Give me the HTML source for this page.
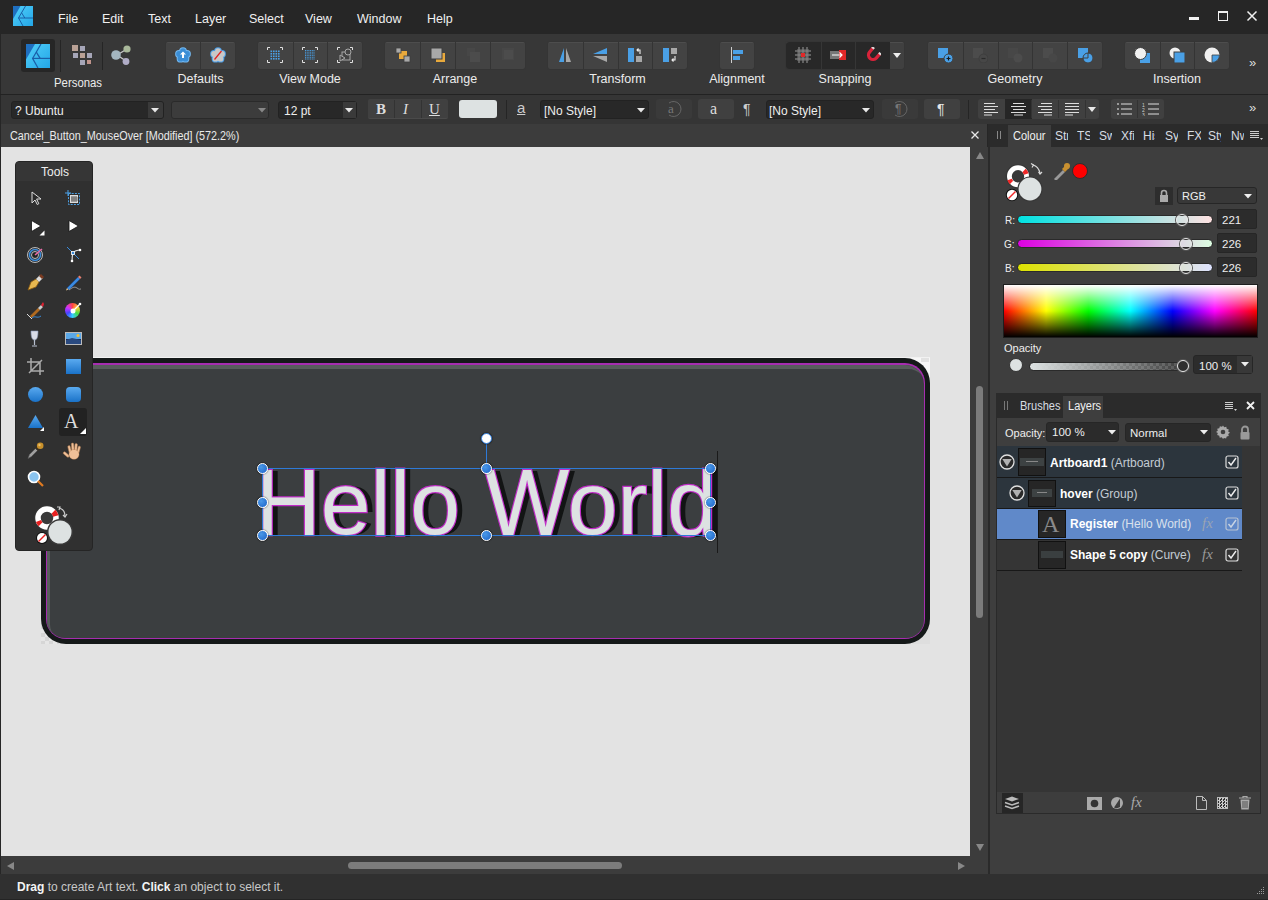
<!DOCTYPE html>
<html><head><meta charset="utf-8">
<style>
*{box-sizing:border-box;margin:0;padding:0}
html,body{width:1268px;height:900px;overflow:hidden;background:#262626;font-family:"Liberation Sans",sans-serif;color:#e6e6e6}
.a{position:absolute}
.t{position:absolute;white-space:pre;line-height:1;font-size:12px;color:#e8e8e8}
.mn{position:absolute;top:13px;font-size:12.5px;color:#f0f0f0;white-space:pre;line-height:1}
.grp{position:absolute;top:42px;height:27px;background:#434343;border-radius:2px;border-top:1px solid #4d4d4d;box-shadow:0 0 1px #2c2c2c}
.sep{position:absolute;top:0;width:1px;height:27px;background:#333}
.lbl{position:absolute;top:73px;font-size:12.5px;color:#ececec;white-space:pre;line-height:1}
.hd{width:11px;height:11px;border-radius:50%;border:1.5px solid #fff;background:radial-gradient(circle at 35% 35%,#4a98e8,#1a62c8);box-shadow:0 0 1px 1px rgba(0,0,0,.25)}
.thumb{width:12px;height:12px;border-radius:50%;border:1.5px solid #e8e8e8;box-shadow:0 0 0 1px #555;background:transparent}
.hwl i{font-style:normal;color:transparent!important;-webkit-text-stroke:0!important}
</style></head><body>
<!-- MENU BAR -->
<div class="a" style="left:0;top:0;width:1268px;height:34px;background:#262626"></div>
<div id="menu"></div>
<!-- MAIN TOOLBAR -->
<div class="a" style="left:1px;top:34px;width:1267px;height:60px;background:#373737"></div>
<div class="a" style="left:0;top:94px;width:1268px;height:1px;background:#222"></div>
<!-- CONTEXT TOOLBAR -->
<div class="a" style="left:1px;top:95px;width:1267px;height:29px;background:#353535"></div>
<!-- DOC TAB -->
<div class="a" style="left:1px;top:124px;width:986px;height:23px;background:#3c3c3c"></div>
<!-- CANVAS -->
<div class="a" style="left:1px;top:147px;width:969px;height:709px;background:#e3e3e3"></div>
<!-- ARTBOARD -->
<div class="a" style="left:41px;top:357px;width:889px;height:1px;background:#f2f2f2"></div>
<div class="a" style="left:912px;top:358px;width:18px;height:22px;background:#f7f7f7"></div>
<div class="a" style="left:921px;top:358px;width:8px;height:4px;background:#e2e2e2"></div>
<div class="a" style="left:41px;top:621px;width:23px;height:23px;background:repeating-conic-gradient(#d6d6d6 0 25%,#e6e6e6 0 50%) 0 0/8px 8px"></div>
<div class="a" style="left:907px;top:621px;width:23px;height:23px;background:#dedede"></div>
<div class="a" style="left:41px;top:358px;width:889px;height:286px;border-radius:25px;background:#151919"></div>
<div class="a" style="left:46px;top:363px;width:879px;height:276px;border-radius:20px;background:#a62db0"></div>
<div class="a" style="left:47px;top:365px;width:877px;height:273px;border-radius:19px 19px 18px 18px;background:#3b3e40;box-shadow:inset 3px 4px 0 #575d5c"></div>
<!-- TEXT -->
<div class="a" style="left:256px;top:458.5px;width:470px;height:100px;font-size:89.5px;line-height:90px;white-space:pre;clip-path:inset(9px -20px -20px -20px)">
<div class="a hwl" style="left:0;top:0;transform:scaleY(1.062);transform-origin:0 76px"><span class="a" style="left:0;top:0;color:#121414;transform:translate(6px,0.5px)">H<i>e</i><i>l</i><i>l</i><i>o</i> W<i>o</i><i>r</i><i>l</i><i>d</i></span></div>
<div class="a hwl" style="left:0;top:0;transform:scaleY(1.03);transform-origin:0 76px"><span class="a" style="left:0;top:0;color:#121414;transform:translate(6px,0.5px)"><i>H</i><i>e</i>ll<i>o</i> <i>W</i><i>o</i><i>r</i>ld</span></div>
<div class="a hwl" style="left:0;top:0;transform:translateY(-1.5px) scaleY(0.985);transform-origin:0 76px"><span class="a" style="left:0;top:0;color:#121414;transform:translate(6px,0.5px)"><i>H</i>e<i>l</i><i>l</i>o <i>W</i>or<i>l</i><i>d</i></span></div>
<div class="a hwl" style="left:0;top:0;transform:scaleY(1.062);transform-origin:0 76px"><span class="a" style="left:0;top:0;color:#c02cc8;-webkit-text-stroke:2.4px #c02cc8">H<i>e</i><i>l</i><i>l</i><i>o</i> W<i>o</i><i>r</i><i>l</i><i>d</i></span></div>
<div class="a hwl" style="left:0;top:0;transform:scaleY(1.03);transform-origin:0 76px"><span class="a" style="left:0;top:0;color:#c02cc8;-webkit-text-stroke:2.4px #c02cc8"><i>H</i><i>e</i>ll<i>o</i> <i>W</i><i>o</i><i>r</i>ld</span></div>
<div class="a hwl" style="left:0;top:0;transform:translateY(-1.5px) scaleY(0.985);transform-origin:0 76px"><span class="a" style="left:0;top:0;color:#c02cc8;-webkit-text-stroke:2.4px #c02cc8"><i>H</i>e<i>l</i><i>l</i>o <i>W</i>or<i>l</i><i>d</i></span></div>
<div class="a hwl" style="left:0;top:0;transform:scaleY(1.062);transform-origin:0 76px"><span class="a" style="left:0;top:0;color:#dde2e2">H<i>e</i><i>l</i><i>l</i><i>o</i> W<i>o</i><i>r</i><i>l</i><i>d</i></span></div>
<div class="a hwl" style="left:0;top:0;transform:scaleY(1.03);transform-origin:0 76px"><span class="a" style="left:0;top:0;color:#dde2e2"><i>H</i><i>e</i>ll<i>o</i> <i>W</i><i>o</i><i>r</i>ld</span></div>
<div class="a hwl" style="left:0;top:0;transform:translateY(-1.5px) scaleY(0.985);transform-origin:0 76px"><span class="a" style="left:0;top:0;color:#dde2e2"><i>H</i>e<i>l</i><i>l</i>o <i>W</i>or<i>l</i><i>d</i></span></div>
</div>
<!-- SELECTION -->
<div class="a" style="left:262px;top:468px;width:449px;height:68px;border:1px solid #2e7ad8"></div>
<div class="a" style="left:486px;top:438px;width:1px;height:30px;background:#2e7ad8"></div>
<div class="a hd" style="left:256.5px;top:462.5px"></div>
<div class="a hd" style="left:480.5px;top:462.5px"></div>
<div class="a hd" style="left:704.5px;top:462.5px"></div>
<div class="a hd" style="left:256.5px;top:496.5px"></div>
<div class="a hd" style="left:704.5px;top:496.5px"></div>
<div class="a hd" style="left:256.5px;top:529.5px"></div>
<div class="a hd" style="left:480.5px;top:529.5px"></div>
<div class="a hd" style="left:704.5px;top:529.5px"></div>
<div class="a hd" style="left:480.5px;top:432.5px;background:#fff;border-color:#2e7ad8;border-width:1.5px"></div>
<div class="a" style="left:717px;top:451px;width:1px;height:102px;background:#1a1a1a"></div>
<!-- SCROLLBARS -->
<div class="a" style="left:970px;top:147px;width:18px;height:727px;background:#3c3c3c"></div>
<div class="a" style="left:1px;top:856px;width:969px;height:18px;background:#3c3c3c"></div>
<div class="a" style="left:976px;top:386px;width:7px;height:232px;background:#7c7c7c;border-radius:4px"></div>
<div class="a" style="left:348px;top:862px;width:274px;height:7px;background:#7c7c7c;border-radius:4px"></div>
<!-- DIVIDER -->
<div class="a" style="left:988px;top:124px;width:2px;height:750px;background:#2a2a2a"></div>
<!-- RIGHT PANEL -->
<div class="a" style="left:990px;top:124px;width:278px;height:750px;background:#3e3e3e"></div>
<div class="a" style="left:990px;top:124px;width:278px;height:23px;background:#2b2b2b"></div>
<!-- layers frame -->
<div class="a" style="left:996px;top:393px;width:265px;height:421px;background:#353535;border:1px solid #2a2a2a"></div>
<div class="a" style="left:996px;top:393px;width:265px;height:25px;background:#2b2b2b"></div>
<div class="a" style="left:997px;top:418px;width:263px;height:28px;background:#3e3e3e"></div>
<div class="a" style="left:997px;top:792px;width:263px;height:21px;background:#3d3d3d"></div>
<!-- STATUS BAR -->
<div class="a" style="left:0;top:874px;width:1268px;height:26px;background:#303030"></div>
<!-- MENU CONTENT -->
<svg class="a" style="left:13px;top:6px" width="20" height="20" viewBox="0 0 20 20">
<defs><linearGradient id="lg1" x1="0" y1="0" x2="1" y2="1"><stop offset="0" stop-color="#52d0fa"/><stop offset="1" stop-color="#23a6e6"/></linearGradient></defs>
<rect width="20" height="20" fill="url(#lg1)"/>
<polygon points="0,0 7.5,0 0,13" fill="#1f6fc0"/>
<polyline points="12.5,0 5.5,12 10,20" fill="none" stroke="#1a5fa8" stroke-width="1"/>
<line x1="5.5" y1="12" x2="20" y2="12" stroke="#1a5fa8" stroke-width="1"/><path d="M8.6 6.8L11.8 12" stroke="#1a5fa8" stroke-width="1"/>
</svg>
<div class="mn" style="left:58px">File</div>
<div class="mn" style="left:102px">Edit</div>
<div class="mn" style="left:148px">Text</div>
<div class="mn" style="left:195px">Layer</div>
<div class="mn" style="left:249px">Select</div>
<div class="mn" style="left:305px">View</div>
<div class="mn" style="left:357px">Window</div>
<div class="mn" style="left:427px">Help</div>
<div class="a" style="left:1189px;top:17px;width:10px;height:3px;background:#f0f0f0"></div>
<div class="a" style="left:1218px;top:11px;width:10px;height:10px;border:1.3px solid #f0f0f0;border-top-width:2.5px"></div>
<svg class="a" style="left:1246px;top:10px" width="12" height="12" viewBox="0 0 12 12"><path d="M1.5 1.5L10.5 10.5M10.5 1.5L1.5 10.5" stroke="#f0f0f0" stroke-width="1.5"/></svg>
<!-- TOOLBAR -->
<div class="a" style="left:21px;top:39px;width:34px;height:33px;background:#262626;border-radius:3px"></div>
<svg class="a" style="left:26px;top:44px" width="24" height="24" viewBox="0 0 20 20">
<rect width="20" height="20" fill="url(#lg1)"/><polygon points="0,0 7.5,0 0,13" fill="#1f6fc0"/>
<polyline points="12.5,0 5.5,12 10,20" fill="none" stroke="#1a5fa8" stroke-width="1"/><line x1="5.5" y1="12" x2="20" y2="12" stroke="#1a5fa8" stroke-width="1"/><path d="M8.6 6.8L11.8 12" stroke="#1a5fa8" stroke-width="1"/></svg>
<div class="a" style="left:60px;top:40px;width:1px;height:32px;background:#252525"></div>
<div class="a" style="left:102px;top:42px;width:1px;height:28px;background:#252525"></div>
<svg class="a" style="left:72px;top:45px" width="21" height="20" viewBox="0 0 21 20">
<rect x="0" y="0" width="6" height="6" fill="#b9a195"/><rect x="8" y="1" width="5" height="5" fill="#a6a6b8"/>
<rect x="1" y="8" width="5" height="5" fill="#a6a6b8"/><rect x="8" y="8" width="5" height="5" fill="#b9a195"/><rect x="15" y="8" width="5" height="5" fill="#a6a6b8"/>
<rect x="8" y="15" width="5" height="5" fill="#a6a6b8"/><rect x="15" y="15" width="4" height="4" fill="#c0948c"/></svg>
<svg class="a" style="left:111px;top:45px" width="21" height="21" viewBox="0 0 21 21">
<path d="M6 10L16 4M6 10L15 16" stroke="#c8c8c8" stroke-width="1.3"/>
<circle cx="5" cy="10" r="4.8" fill="#a3b5bf"/><circle cx="16" cy="4" r="3.6" fill="#a9b89a"/><circle cx="15" cy="16.5" r="3.4" fill="#b0acc6"/></svg>
<div class="lbl" style="left:54px;top:77px;transform:scaleX(.91);transform-origin:0 0">Personas</div>
<div class="grp" style="left:166px;width:69px"></div>
<div class="a" style="left:200px;top:42px;width:1px;height:27px;background:#343434"></div>
<svg class="a" style="left:175.2px;top:47px" width="16" height="16" viewBox="0 0 16 16"><circle cx="8.00" cy="4.10" r="3.9" fill="#74b8f0"/><circle cx="11.99" cy="7.00" r="3.9" fill="#74b8f0"/><circle cx="10.47" cy="11.70" r="3.9" fill="#74b8f0"/><circle cx="5.53" cy="11.70" r="3.9" fill="#74b8f0"/><circle cx="4.01" cy="7.00" r="3.9" fill="#74b8f0"/><circle cx="8" cy="8.3" r="5" fill="#74b8f0"/><circle cx="8.00" cy="4.10" r="2.9" fill="#3b8ed6"/><circle cx="11.99" cy="7.00" r="2.9" fill="#3b8ed6"/><circle cx="10.47" cy="11.70" r="2.9" fill="#3b8ed6"/><circle cx="5.53" cy="11.70" r="2.9" fill="#3b8ed6"/><circle cx="4.01" cy="7.00" r="2.9" fill="#3b8ed6"/><circle cx="8" cy="8.3" r="4.6" fill="#3b8ed6"/><path d="M8 4.5l3 3H9v3.5H7V7.5H5z" fill="#fff"/></svg>
<svg class="a" style="left:209.8px;top:47px" width="16" height="16" viewBox="0 0 16 16"><circle cx="8.00" cy="4.10" r="3.9" fill="#4a9ee8"/><circle cx="11.99" cy="7.00" r="3.9" fill="#4a9ee8"/><circle cx="10.47" cy="11.70" r="3.9" fill="#4a9ee8"/><circle cx="5.53" cy="11.70" r="3.9" fill="#4a9ee8"/><circle cx="4.01" cy="7.00" r="3.9" fill="#4a9ee8"/><circle cx="8" cy="8.3" r="5" fill="#4a9ee8"/><circle cx="8.00" cy="4.10" r="2.9" fill="#c8c8c8"/><circle cx="11.99" cy="7.00" r="2.9" fill="#c8c8c8"/><circle cx="10.47" cy="11.70" r="2.9" fill="#c8c8c8"/><circle cx="5.53" cy="11.70" r="2.9" fill="#c8c8c8"/><circle cx="4.01" cy="7.00" r="2.9" fill="#c8c8c8"/><circle cx="8" cy="8.3" r="4.6" fill="#c8c8c8"/><path d="M4.5 12.5L11.5 4" stroke="#e02020" stroke-width="1.2"/></svg>
<div class="lbl" style="left:126px;width:149px;text-align:center">Defaults</div>
<div class="grp" style="left:258px;width:104px"></div>
<div class="a" style="left:293px;top:42px;width:1px;height:27px;background:#343434"></div>
<div class="a" style="left:327px;top:42px;width:1px;height:27px;background:#343434"></div>
<svg class="a" style="left:267.3px;top:47px" width="16" height="16" viewBox="0 0 16 16"><rect x="3.5" y="3.5" width="1.6" height="1.6" fill="#4aa0e6"/><rect x="3.5" y="6.0" width="1.6" height="1.6" fill="#4aa0e6"/><rect x="3.5" y="8.5" width="1.6" height="1.6" fill="#4aa0e6"/><rect x="3.5" y="11.0" width="1.6" height="1.6" fill="#4aa0e6"/><rect x="6.0" y="3.5" width="1.6" height="1.6" fill="#4aa0e6"/><rect x="6.0" y="6.0" width="1.6" height="1.6" fill="#4aa0e6"/><rect x="6.0" y="8.5" width="1.6" height="1.6" fill="#4aa0e6"/><rect x="6.0" y="11.0" width="1.6" height="1.6" fill="#4aa0e6"/><rect x="8.5" y="3.5" width="1.6" height="1.6" fill="#4aa0e6"/><rect x="8.5" y="6.0" width="1.6" height="1.6" fill="#4aa0e6"/><rect x="8.5" y="8.5" width="1.6" height="1.6" fill="#4aa0e6"/><rect x="8.5" y="11.0" width="1.6" height="1.6" fill="#4aa0e6"/><rect x="11.0" y="3.5" width="1.6" height="1.6" fill="#4aa0e6"/><rect x="11.0" y="6.0" width="1.6" height="1.6" fill="#4aa0e6"/><rect x="11.0" y="8.5" width="1.6" height="1.6" fill="#4aa0e6"/><rect x="11.0" y="11.0" width="1.6" height="1.6" fill="#4aa0e6"/><path d="M0.5 3V0.5H3M13 0.5h2.5V3M15.5 13v2.5H13M3 15.5H0.5V13" stroke="#e0e0e0" stroke-width="1" fill="none"/></svg>
<svg class="a" style="left:302.0px;top:47px" width="16" height="16" viewBox="0 0 16 16"><rect x="3.0" y="3.0" width="1" height="1" fill="#4aa0e6"/><rect x="3.0" y="4.7" width="1" height="1" fill="#4aa0e6"/><rect x="3.0" y="6.4" width="1" height="1" fill="#4aa0e6"/><rect x="3.0" y="8.1" width="1" height="1" fill="#4aa0e6"/><rect x="3.0" y="9.8" width="1" height="1" fill="#4aa0e6"/><rect x="3.0" y="11.5" width="1" height="1" fill="#4aa0e6"/><rect x="4.7" y="3.0" width="1" height="1" fill="#4aa0e6"/><rect x="4.7" y="4.7" width="1" height="1" fill="#4aa0e6"/><rect x="4.7" y="6.4" width="1" height="1" fill="#4aa0e6"/><rect x="4.7" y="8.1" width="1" height="1" fill="#4aa0e6"/><rect x="4.7" y="9.8" width="1" height="1" fill="#4aa0e6"/><rect x="4.7" y="11.5" width="1" height="1" fill="#4aa0e6"/><rect x="6.4" y="3.0" width="1" height="1" fill="#4aa0e6"/><rect x="6.4" y="4.7" width="1" height="1" fill="#4aa0e6"/><rect x="6.4" y="6.4" width="1" height="1" fill="#4aa0e6"/><rect x="6.4" y="8.1" width="1" height="1" fill="#4aa0e6"/><rect x="6.4" y="9.8" width="1" height="1" fill="#4aa0e6"/><rect x="6.4" y="11.5" width="1" height="1" fill="#4aa0e6"/><rect x="8.1" y="3.0" width="1" height="1" fill="#4aa0e6"/><rect x="8.1" y="4.7" width="1" height="1" fill="#4aa0e6"/><rect x="8.1" y="6.4" width="1" height="1" fill="#4aa0e6"/><rect x="8.1" y="8.1" width="1" height="1" fill="#4aa0e6"/><rect x="8.1" y="9.8" width="1" height="1" fill="#4aa0e6"/><rect x="8.1" y="11.5" width="1" height="1" fill="#4aa0e6"/><rect x="9.8" y="3.0" width="1" height="1" fill="#4aa0e6"/><rect x="9.8" y="4.7" width="1" height="1" fill="#4aa0e6"/><rect x="9.8" y="6.4" width="1" height="1" fill="#4aa0e6"/><rect x="9.8" y="8.1" width="1" height="1" fill="#4aa0e6"/><rect x="9.8" y="9.8" width="1" height="1" fill="#4aa0e6"/><rect x="9.8" y="11.5" width="1" height="1" fill="#4aa0e6"/><rect x="11.5" y="3.0" width="1" height="1" fill="#4aa0e6"/><rect x="11.5" y="4.7" width="1" height="1" fill="#4aa0e6"/><rect x="11.5" y="6.4" width="1" height="1" fill="#4aa0e6"/><rect x="11.5" y="8.1" width="1" height="1" fill="#4aa0e6"/><rect x="11.5" y="9.8" width="1" height="1" fill="#4aa0e6"/><rect x="11.5" y="11.5" width="1" height="1" fill="#4aa0e6"/><path d="M0.5 3V0.5H3M13 0.5h2.5V3M15.5 13v2.5H13M3 15.5H0.5V13" stroke="#e0e0e0" stroke-width="1" fill="none"/></svg>
<svg class="a" style="left:336.7px;top:47px" width="16" height="16" viewBox="0 0 16 16"><path d="M0.5 3V0.5H3M13 0.5h2.5V3M15.5 13v2.5H13M3 15.5H0.5V13" stroke="#e0e0e0" stroke-width="1" fill="none"/><rect x="5" y="5" width="8" height="8" fill="none" stroke="#a8a8a8"/><circle cx="11" cy="5" r="3" fill="#444" stroke="#a8a8a8"/><path d="M3 8l5 3-5 3z" fill="#444" stroke="#a8a8a8"/></svg>
<div class="lbl" style="left:218px;width:184px;text-align:center">View Mode</div>
<div class="grp" style="left:385px;width:140px"></div>
<div class="a" style="left:420px;top:42px;width:1px;height:27px;background:#343434"></div>
<div class="a" style="left:455px;top:42px;width:1px;height:27px;background:#343434"></div>
<div class="a" style="left:490px;top:42px;width:1px;height:27px;background:#343434"></div>
<svg class="a" style="left:394.5px;top:47px" width="16" height="16" viewBox="0 0 16 16"><rect x="1" y="1" width="5" height="5" fill="#a8a8a8"/><rect x="4" y="4" width="8" height="8" fill="#e8a93c"/><rect x="9" y="9" width="6" height="6" fill="#a8a8a8" stroke="#3e3e3e" stroke-width=".8"/><rect x="1" y="1" width="5" height="5" fill="#a8a8a8" stroke="#3e3e3e" stroke-width=".8"/></svg>
<svg class="a" style="left:429.5px;top:47px" width="16" height="16" viewBox="0 0 16 16"><rect x="6" y="6" width="9" height="9" fill="#e8a93c"/><rect x="1" y="1" width="11" height="11" fill="#a8a8a8" stroke="#3e3e3e" stroke-width="1"/></svg>
<svg class="a" style="left:464.5px;top:47px" width="16" height="16" viewBox="0 0 16 16"><rect x="2" y="1" width="8" height="8" fill="#474747"/><rect x="5" y="5" width="10" height="10" fill="#4c4c4c"/></svg>
<svg class="a" style="left:499.5px;top:47px" width="16" height="16" viewBox="0 0 16 16"><rect x="2" y="1" width="12" height="12" fill="#474747"/><rect x="4" y="3" width="9" height="9" fill="#4c4c4c"/></svg>
<div class="lbl" style="left:345px;width:220px;text-align:center">Arrange</div>
<div class="grp" style="left:548px;width:139px"></div>
<div class="a" style="left:583px;top:42px;width:1px;height:27px;background:#343434"></div>
<div class="a" style="left:618px;top:42px;width:1px;height:27px;background:#343434"></div>
<div class="a" style="left:652px;top:42px;width:1px;height:27px;background:#343434"></div>
<svg class="a" style="left:557.4px;top:47px" width="16" height="16" viewBox="0 0 16 16"><path d="M7 1L2 15h5z" fill="#4aa0e6"/><path d="M9 1l5 14H9z" fill="#a8a8a8"/></svg>
<svg class="a" style="left:592.1px;top:47px" width="16" height="16" viewBox="0 0 16 16"><path d="M15 1L1 7h14z" fill="#4aa0e6"/><path d="M15 15L1 9h14z" fill="#a8a8a8"/></svg>
<svg class="a" style="left:626.9px;top:47px" width="16" height="16" viewBox="0 0 16 16"><rect x="1" y="1" width="6" height="14" fill="#4aa0e6"/><rect x="9" y="9" width="6" height="6" fill="#a8a8a8"/><path d="M13 7V3H10M11.5 1.5L10 3l1.5 1.5" stroke="#f0f0f0" fill="none" stroke-width="1.1"/></svg>
<svg class="a" style="left:661.6px;top:47px" width="16" height="16" viewBox="0 0 16 16"><rect x="1" y="1" width="6" height="14" fill="#4aa0e6"/><rect x="9" y="1" width="6" height="6" fill="#a8a8a8"/><path d="M13 9v4H10M11.5 11.5L10 13l1.5 1.5" stroke="#f0f0f0" fill="none" stroke-width="1.1"/></svg>
<div class="lbl" style="left:508px;width:219px;text-align:center">Transform</div>
<div class="grp" style="left:720px;width:34px"></div>
<svg class="a" style="left:729.0px;top:47px" width="16" height="16" viewBox="0 0 16 16"><rect x="2" y="0" width="1" height="16" fill="#ccc"/><rect x="4" y="3" width="10" height="4" fill="#4aa0e6"/><rect x="4" y="9" width="7" height="4" fill="#4aa0e6"/></svg>
<div class="lbl" style="left:680px;width:114px;text-align:center">Alignment</div>
<div class="grp" style="left:928px;width:174px"></div>
<div class="a" style="left:963px;top:42px;width:1px;height:27px;background:#343434"></div>
<div class="a" style="left:998px;top:42px;width:1px;height:27px;background:#343434"></div>
<div class="a" style="left:1032px;top:42px;width:1px;height:27px;background:#343434"></div>
<div class="a" style="left:1067px;top:42px;width:1px;height:27px;background:#343434"></div>
<svg class="a" style="left:937.4px;top:47px" width="16" height="16" viewBox="0 0 16 16"><rect x="1" y="1" width="10" height="10" fill="#4aa0e6"/><circle cx="11.5" cy="11.5" r="4.5" fill="#4aa0e6" stroke="#3e3e3e" stroke-width="1"/><path d="M9.5 11.5h4M11.5 9.5v4" stroke="#1a1a1a" stroke-width="1.2"/></svg>
<svg class="a" style="left:972.2px;top:47px" width="16" height="16" viewBox="0 0 16 16"><rect x="1" y="1" width="10" height="10" fill="#4c4c4c"/><circle cx="11.5" cy="11.5" r="4.5" fill="#474747" stroke="#3e3e3e" stroke-width="1"/><path d="M9.5 11.5h4" stroke="#2a2a2a" stroke-width="1.2"/></svg>
<svg class="a" style="left:1007.0px;top:47px" width="16" height="16" viewBox="0 0 16 16"><rect x="1" y="1" width="10" height="10" fill="#474747"/><circle cx="11" cy="11" r="4.5" fill="#4c4c4c"/></svg>
<svg class="a" style="left:1041.8px;top:47px" width="16" height="16" viewBox="0 0 16 16"><rect x="1" y="1" width="10" height="10" fill="#4c4c4c"/><circle cx="11" cy="11" r="4.5" fill="#474747"/></svg>
<svg class="a" style="left:1076.6px;top:47px" width="16" height="16" viewBox="0 0 16 16"><rect x="1" y="1" width="10" height="10" fill="#4aa0e6"/><circle cx="11" cy="11" r="5" fill="#4aa0e6" stroke="#3e3e3e" stroke-width="1"/><path d="M6 11h5V6" stroke="#3e3e3e" fill="none" stroke-width="1"/></svg>
<div class="lbl" style="left:888px;width:254px;text-align:center">Geometry</div>
<div class="grp" style="left:1125px;width:104px"></div>
<div class="a" style="left:1160px;top:42px;width:1px;height:27px;background:#343434"></div>
<div class="a" style="left:1194px;top:42px;width:1px;height:27px;background:#343434"></div>
<svg class="a" style="left:1134.3px;top:47px" width="16" height="16" viewBox="0 0 16 16"><rect x="6" y="6" width="10" height="10" fill="#4aa0e6"/><circle cx="6.5" cy="6.5" r="6" fill="#f0f0f0" stroke="#3e3e3e" stroke-width="1"/></svg>
<svg class="a" style="left:1169.0px;top:47px" width="16" height="16" viewBox="0 0 16 16"><circle cx="6" cy="6" r="5.5" fill="#f0f0f0"/><rect x="5" y="5" width="11" height="11" fill="#4aa0e6" stroke="#3e3e3e" stroke-width="1"/></svg>
<svg class="a" style="left:1203.7px;top:47px" width="16" height="16" viewBox="0 0 16 16"><circle cx="8" cy="8" r="7.5" fill="#f0f0f0"/><path d="M8 8h7.5A7.5 7.5 0 0 1 8 15.5z" fill="#4aa0e6" stroke="#3e3e3e" stroke-width=".8"/></svg>
<div class="lbl" style="left:1085px;width:184px;text-align:center">Insertion</div>
<div class="grp" style="left:786px;width:118px;background:#404040"></div>
<div class="a" style="left:786px;top:42px;width:104px;height:27px;background:#282828;border-radius:3px 0 0 3px"></div>
<div class="a" style="left:821px;top:42px;width:1px;height:27px;background:#363636"></div>
<div class="a" style="left:855px;top:42px;width:1px;height:27px;background:#363636"></div>
<svg class="a" style="left:795.3px;top:47px" width="16" height="16" viewBox="0 0 16 16"><path d="M4 0v16M8 0v16M12 0v16M0 4h16M0 8h16M0 12h16" stroke="#9a9a9a" stroke-width="1"/><rect x="1" y="1" width="14" height="14" fill="none"/><rect x="2" y="2" width="12" height="12" fill="#777" opacity=".5"/><rect x="6" y="6" width="4" height="4" fill="#e02828"/></svg>
<svg class="a" style="left:830.0px;top:47px" width="16" height="16" viewBox="0 0 16 16"><rect x="0" y="4" width="9" height="8" fill="#777"/><rect x="9" y="3" width="7" height="10" fill="#e02828"/><path d="M2 8h10M9.5 5.5L12 8l-2.5 2.5" stroke="#fff" fill="none" stroke-width="1.2"/></svg>
<svg class="a" style="left:864.7px;top:47px" width="16" height="16" viewBox="0 0 16 16"><g transform="rotate(40 8 8)"><path d="M3.5 2v6a4.5 4.5 0 0 0 9 0V2" stroke="#d8233a" stroke-width="3.2" fill="none"/><path d="M2 2.5h3M11 2.5h3" stroke="#ddd" stroke-width="2"/></g></svg>
<svg class="a" style="left:893px;top:53px" width="8" height="5" viewBox="0 0 8 5"><path d="M0 0h8L4 5z" fill="#eee"/></svg>
<div class="lbl" style="left:786px;width:118px;text-align:center">Snapping</div>
<div class="a" style="left:1249px;top:56px;font-size:13px;color:#ddd;line-height:1">&#187;</div>
<!-- CONTEXT BAR -->
<div class="a" style="left:11px;top:101px;width:153px;height:18px;background:#282828;border:1px solid #222;border-radius:3px"></div>
<div class="a" style="left:148px;top:102px;width:15px;height:16px;background:#3a3a3a;border-radius:0 2px 2px 0"></div>
<svg class="a" style="left:151px;top:108px" width="8" height="5"><path d="M0 0h8L4 4.5z" fill="#e8e8e8"/></svg>
<div class="t" style="left:15px;top:105px;font-size:12px;color:#eee">? Ubuntu</div>
<div class="a" style="left:171px;top:101px;width:98px;height:18px;background:#3c3c3c;border:1px solid #2a2a2a;border-radius:3px"></div>
<svg class="a" style="left:258px;top:108px" width="8" height="5"><path d="M0 0h8L4 4.5z" fill="#888"/></svg>
<div class="a" style="left:278px;top:101px;width:79px;height:18px;background:#282828;border:1px solid #222;border-radius:3px"></div>
<div class="a" style="left:343px;top:102px;width:13px;height:16px;background:#3a3a3a"></div>
<svg class="a" style="left:345px;top:108px" width="8" height="5"><path d="M0 0h8L4 4.5z" fill="#e8e8e8"/></svg>
<div class="t" style="left:284px;top:105px;font-size:12px;color:#eee">12 pt</div>
<div class="a" style="left:368px;top:99px;width:80px;height:20px;background:#404040;border-radius:2px;border-bottom:1px solid #4a4a4a"></div>
<div class="a" style="left:394px;top:100px;width:1px;height:18px;background:#333"></div>
<div class="a" style="left:421px;top:100px;width:1px;height:18px;background:#333"></div>
<div class="t" style="left:376px;top:102px;font-family:'Liberation Serif';font-size:15px;font-weight:bold;color:#ddd">B</div>
<div class="t" style="left:403px;top:102px;font-family:'Liberation Serif';font-size:15px;font-style:italic;color:#ddd">I</div>
<div class="t" style="left:429px;top:102px;font-family:'Liberation Serif';font-size:15px;color:#ddd;text-decoration:underline">U</div>
<div class="a" style="left:459px;top:100px;width:38px;height:18px;background:#dde2e2;border-radius:3px"></div>
<div class="a" style="left:506px;top:100px;width:1px;height:19px;background:#252525"></div>
<div class="t" style="left:517px;top:100px;font-size:15px;color:#ccc;text-decoration:underline">a</div>
<div class="a" style="left:540px;top:100px;width:109px;height:19px;background:#282828;border:1px solid #222;border-radius:3px"></div>
<div class="t" style="left:544px;top:105px;font-size:12px;color:#eee">[No Style]</div>
<svg class="a" style="left:637px;top:108px" width="8" height="5"><path d="M0 0h8L4 4.5z" fill="#e8e8e8"/></svg>
<div class="a" style="left:656px;top:99px;width:36px;height:20px;background:#3a3a3a;border-radius:3px"></div>
<div class="t" style="left:668px;top:102px;font-size:13px;color:#777;font-family:'Liberation Serif'">a</div>
<svg class="a" style="left:664px;top:100px" width="20" height="18"><path d="M5 3A7.5 7.5 0 1 1 5 15" stroke="#666" fill="none"/></svg>
<div class="a" style="left:698px;top:99px;width:36px;height:20px;background:#404040;border-radius:3px"></div>
<div class="t" style="left:710px;top:101px;font-size:16px;color:#ddd;font-family:'Liberation Serif'">a</div>
<div class="t" style="left:743px;top:102px;font-size:14px;color:#ccc">&#182;</div>
<div class="a" style="left:766px;top:100px;width:108px;height:19px;background:#282828;border:1px solid #222;border-radius:3px"></div>
<div class="t" style="left:769px;top:105px;font-size:12px;color:#eee">[No Style]</div>
<svg class="a" style="left:862px;top:108px" width="8" height="5"><path d="M0 0h8L4 4.5z" fill="#e8e8e8"/></svg>
<div class="a" style="left:882px;top:99px;width:36px;height:20px;background:#3a3a3a;border-radius:3px"></div>
<div class="t" style="left:895px;top:103px;font-size:12px;color:#777">&#182;</div>
<svg class="a" style="left:890px;top:100px" width="20" height="18"><path d="M5 3A7.5 7.5 0 1 1 5 15" stroke="#666" fill="none"/></svg>
<div class="a" style="left:924px;top:99px;width:36px;height:20px;background:#404040;border-radius:3px"></div>
<div class="t" style="left:937px;top:102px;font-size:14px;color:#e6e6e6">&#182;</div>
<div class="a" style="left:968px;top:100px;width:1px;height:19px;background:#252525"></div>
<div class="a" style="left:978px;top:99px;width:121px;height:20px;background:#404040;border-radius:3px"></div>
<div class="a" style="left:1005px;top:99px;width:27px;height:20px;background:#262626"></div>
<div class="a" style="left:1031px;top:100px;width:1px;height:18px;background:#333"></div>
<div class="a" style="left:1058px;top:100px;width:1px;height:18px;background:#333"></div>
<div class="a" style="left:1085px;top:100px;width:1px;height:18px;background:#333"></div>
<svg class="a" style="left:1085px;top:107px" width="14" height="6"><path d="M3 0h8L7 5z" fill="#e8e8e8"/></svg>
<svg class="a" style="left:983px;top:102px" width="17" height="14"><path d="M1 1.5h11M1 4.5h14M1 7.5h11M1 10.5h14M1 13h8" stroke="#ddd"/></svg>
<svg class="a" style="left:1010px;top:102px" width="17" height="14"><path d="M3 1.5h11M1 4.5h15M3 7.5h11M1 10.5h15M4 13h9" stroke="#ddd"/></svg>
<svg class="a" style="left:1037px;top:102px" width="17" height="14"><path d="M4 1.5h11M1 4.5h14M4 7.5h11M1 10.5h14M7 13h8" stroke="#ddd"/></svg>
<svg class="a" style="left:1064px;top:102px" width="17" height="14"><path d="M1 1.5h14M1 4.5h14M1 7.5h14M1 10.5h14M1 13h8" stroke="#ddd"/></svg>
<div class="a" style="left:1111px;top:99px;width:53px;height:20px;background:#404040;border-radius:3px"></div>
<div class="a" style="left:1137px;top:100px;width:1px;height:18px;background:#333"></div>
<svg class="a" style="left:1116px;top:102px" width="17" height="14"><path d="M5 2h11M5 7h11M5 12h11" stroke="#ddd"/><path d="M1 2h2M2 1v2M1 7h2M2 6v2M1 12h2M2 11v2" stroke="#ccc" stroke-width=".8"/></svg>
<svg class="a" style="left:1142px;top:102px" width="17" height="14"><path d="M6 2h11M6 7h11M6 12h11" stroke="#ddd"/><text x="0" y="5" font-size="5" fill="#ccc" font-family="Liberation Sans">1</text><text x="0" y="10" font-size="5" fill="#ccc" font-family="Liberation Sans">2</text><text x="0" y="15" font-size="5" fill="#ccc" font-family="Liberation Sans">3</text></svg>
<div class="a" style="left:1249px;top:101px;font-size:13px;color:#ddd;line-height:1">&#187;</div>
<!-- DOC TAB -->
<div class="t" style="left:10px;top:130px;font-size:12px;color:#eaeaea;transform:scaleX(.9);transform-origin:0 0">Cancel_Button_MouseOver [Modified] (572.2%)</div>
<svg class="a" style="left:971px;top:131px" width="8" height="8"><path d="M0.5 0.5L7.5 7.5M7.5 0.5L0.5 7.5" stroke="#e8e8e8" stroke-width="1.3"/></svg>
<!-- TOOLS PANEL -->
<div class="a" style="left:15px;top:161px;width:78px;height:390px;background:#303030;border-radius:4px;border:1px solid #252525"></div>
<div class="a" style="left:16px;top:162px;width:76px;height:19px;background:#363636;border-radius:3px 3px 0 0"></div>
<div class="t" style="left:41px;top:166px;font-size:12px;color:#eee">Tools</div>
<div class="a" style="left:64.5px;top:302.5px;width:15px;height:15px;border-radius:50%;background:conic-gradient(#f44 0,#fc3 60deg,#4d4 120deg,#3cf 180deg,#44f 240deg,#c3f 300deg,#f44 360deg)"></div>
<div class="a" style="left:59px;top:408px;width:28px;height:28px;background:#222;border-radius:3px"></div>
<svg width="0" height="0" style="position:absolute"><defs><linearGradient id="bg1" x1="0" y1="0" x2="0" y2="1"><stop offset="0" stop-color="#5aaaf0"/><stop offset="1" stop-color="#1a72c8"/></linearGradient><radialGradient id="cw"><stop offset="0" stop-color="#fff"/><stop offset="1" stop-color="#f0f"/></radialGradient></defs></svg>
<svg class="a" style="left:25.5px;top:188.5px;overflow:visible" width="19" height="19" viewBox="0 0 19 19"><path d="M6 3v11l3-3 2.2 4.5 1.6-.8L10.6 10H15z" fill="#2a2a2a" stroke="#ddd" stroke-width="1"/></svg>
<svg class="a" style="left:63.5px;top:188.5px;overflow:visible" width="19" height="19" viewBox="0 0 19 19"><rect x="4.5" y="4.5" width="11" height="11" fill="none" stroke="#4aa0e6" stroke-dasharray="2 1.2"/><rect x="6.5" y="6.5" width="7" height="7" fill="#9a9a9a" stroke="#ddd" stroke-width="1"/><path d="M7 9h7M7 11h7" stroke="#555" stroke-width=".7"/><path d="M1 4h6M4 1v6" stroke="#4aa0e6" stroke-width="1"/></svg>
<svg class="a" style="left:25.5px;top:216.5px;overflow:visible" width="19" height="19" viewBox="0 0 19 19"><path d="M5.5 3.5v11l9.5-5.5z" fill="#fff" stroke="#111" stroke-width=".8"/><path d="M18.5 18.5h-5l5-5z" fill="#fff"/></svg>
<svg class="a" style="left:63.5px;top:216.5px;overflow:visible" width="19" height="19" viewBox="0 0 19 19"><path d="M5 3.5v11l9.5-5.5z" fill="#fff" stroke="#111" stroke-width=".8"/></svg>
<svg class="a" style="left:25.5px;top:244.5px;overflow:visible" width="19" height="19" viewBox="0 0 19 19"><circle cx="9" cy="10" r="7.5" fill="none" stroke="#bbb" stroke-width="1"/><circle cx="9" cy="10" r="5.5" fill="none" stroke="#3a8ad8" stroke-width="1.5"/><circle cx="9" cy="10" r="3.5" fill="#222" stroke="#bbb" stroke-width="1"/><path d="M9 10L16 4" stroke="#e86aa8" stroke-width="1.6"/></svg>
<svg class="a" style="left:63.5px;top:244.5px;overflow:visible" width="19" height="19" viewBox="0 0 19 19"><path d="M3 2l6 6 6 6" stroke="#3a8ad8" stroke-width="1"/><path d="M9 8C11 5 14 5 17 5M9 8C8 11 8 14 8 17" stroke="#ddd" stroke-width="1.2" fill="none"/><rect x="7.5" y="6.5" width="3" height="3" fill="#3a8ad8" stroke="#fff" stroke-width=".8"/><circle cx="16" cy="5" r="1.3" fill="#fff"/><circle cx="8" cy="16" r="1.3" fill="#fff"/></svg>
<svg class="a" style="left:25.5px;top:272.5px;overflow:visible" width="19" height="19" viewBox="0 0 19 19"><path d="M2 17l3-8 5-3 3 3-3 5z" fill="#e8b850" stroke="#8a5a10" stroke-width=".8"/><path d="M10 6l3 3 4-4-3-3z" fill="#ddd"/><path d="M13 3l3 3 2-2-3-3z" fill="#7a3a20"/></svg>
<svg class="a" style="left:63.5px;top:272.5px;overflow:visible" width="19" height="19" viewBox="0 0 19 19"><path d="M3 15L14 4l2 2L5 17z" fill="#3a8ae0" stroke="#1a4a90" stroke-width=".6"/><path d="M14 4l1.5-1.5 2 2L16 6z" fill="#e88070"/><path d="M3 15l-1 2.5 2.5-1z" fill="#e8c890"/><path d="M5 17C8 15 10 13 13 15s2 1 4 1" stroke="#aaa" stroke-width=".8" fill="none"/></svg>
<svg class="a" style="left:25.5px;top:300.5px;overflow:visible" width="19" height="19" viewBox="0 0 19 19"><path d="M4 15L12 7l2 2-8 8z" fill="#b06a20"/><path d="M12 7l3-3 2 2-3 3z" fill="#ccc"/><path d="M15 4l2-3 1 2-1 3z" fill="#e02030"/><path d="M1 13l5 5" stroke="#ddd" stroke-width="1"/><path d="M6 17c3-3 5 1 9-2" stroke="#3a8ad8" stroke-width="1" fill="none"/></svg>
<svg class="a" style="left:63.5px;top:300.5px;overflow:visible" width="19" height="19" viewBox="0 0 19 19"><circle cx="9" cy="10" r="2.5" fill="#fff"/><path d="M9 10L16 3" stroke="#fff" stroke-width="1.2"/><circle cx="16" cy="3" r="1.3" fill="#fff"/></svg>
<svg class="a" style="left:25.5px;top:328.5px;overflow:visible" width="19" height="19" viewBox="0 0 19 19"><path d="M5 2h7c0 6-1 9-3.5 9S5 8 5 2z" fill="#d8dce8" stroke="#8898b8" stroke-width=".6"/><path d="M8.5 11v5M6 17h5" stroke="#b8c0d0" stroke-width="1.2"/></svg>
<svg class="a" style="left:63.5px;top:328.5px;overflow:visible" width="19" height="19" viewBox="0 0 19 19"><rect x="1.5" y="3.5" width="16" height="12" fill="#1a2a50" stroke="#bbb" stroke-width="1"/><rect x="2" y="4" width="15" height="6" fill="#5aa8e8"/><path d="M2 11l6-2 9 2v4H2z" fill="#2a4a80"/><circle cx="14" cy="6.5" r="1.5" fill="#f8c030"/></svg>
<svg class="a" style="left:25.5px;top:356.5px;overflow:visible" width="19" height="19" viewBox="0 0 19 19"><path d="M5 1v13h13M1 5h13v13M3 16L16 3" stroke="#aaa" stroke-width="1.5" fill="none"/></svg>
<svg class="a" style="left:63.5px;top:356.5px;overflow:visible" width="19" height="19" viewBox="0 0 19 19"><rect x="2" y="2" width="15" height="15" fill="url(#bg1)"/></svg>
<svg class="a" style="left:25.5px;top:384.5px;overflow:visible" width="19" height="19" viewBox="0 0 19 19"><circle cx="9.5" cy="9.5" r="7.5" fill="url(#bg1)"/></svg>
<svg class="a" style="left:63.5px;top:384.5px;overflow:visible" width="19" height="19" viewBox="0 0 19 19"><rect x="2" y="2" width="15" height="15" rx="4" fill="url(#bg1)"/></svg>
<svg class="a" style="left:25.5px;top:412.5px;overflow:visible" width="19" height="19" viewBox="0 0 19 19"><path d="M9.5 2L17 15H2z" fill="url(#bg1)"/><path d="M18 18h-4l4-4z" fill="#fff"/></svg>
<svg class="a" style="left:25.5px;top:440.5px;overflow:visible" width="19" height="19" viewBox="0 0 19 19"><path d="M2 17.5L3.5 13.5L9.5 7.5L11.5 9.5L5.5 15.5z" fill="#a0a0a0" stroke="#555" stroke-width=".6"/><path d="M9 7l3 3 1.8-1.8-3-3z" fill="#3a3020"/><circle cx="14.2" cy="4.8" r="3.3" fill="#c8902a"/><circle cx="13.5" cy="4" r="1.2" fill="#e8c070"/></svg>
<svg class="a" style="left:63.5px;top:440.5px;overflow:visible" width="19" height="19" viewBox="0 0 19 19"><g fill="#f0c098" stroke="#b07a50" stroke-width=".5"><rect x="4.6" y="4.5" width="2.4" height="9" rx="1.2" transform="rotate(-14 5.8 9)"/><rect x="7.6" y="2" width="2.4" height="10" rx="1.2" transform="rotate(-4 8.8 7)"/><rect x="10.6" y="2.5" width="2.4" height="10" rx="1.2" transform="rotate(6 11.8 7.5)"/><rect x="13.4" y="5" width="2.3" height="8" rx="1.15" transform="rotate(16 14.5 9)"/><rect x="1" y="10" width="2.4" height="7" rx="1.2" transform="rotate(-50 2.2 13.5)"/><ellipse cx="10" cy="13.5" rx="5" ry="4.8"/></g><ellipse cx="10" cy="13.3" rx="4.6" ry="4.4" fill="#f0c098"/></svg>
<svg class="a" style="left:25.5px;top:468.5px;overflow:visible" width="19" height="19" viewBox="0 0 19 19"><circle cx="8" cy="8" r="5.5" fill="#8ac4f0" stroke="#fff" stroke-width="1.6"/><path d="M12 12l5 5" stroke="#e07a20" stroke-width="2.2"/></svg>
<div class="t" style="left:64px;top:411px;font-family:'Liberation Serif';font-size:20px;color:#ddd">A</div>
<svg class="a" style="left:80px;top:428px" width="6" height="6"><path d="M6 0v6H0z" fill="#fff"/></svg>
<svg class="a" style="left:32px;top:504px" width="44" height="44" viewBox="0 0 44 44">
<circle cx="15" cy="14" r="12.5" fill="#3a3a3a"/>
<circle cx="15" cy="14" r="9" fill="none" stroke="#fff" stroke-width="5.5"/>
<path d="M21.4 7.8A9 9 0 0 1 23.8 12" stroke="#e82020" stroke-width="5.5" fill="none"/>
<path d="M8.6 20.2A9 9 0 0 1 6.5 17" stroke="#e82020" stroke-width="5.5" fill="none"/>
<path d="M27 4c4 1 6 4 6 8" stroke="#ccc" stroke-width="1.2" fill="none"/><path d="M25 3l3 0-1 3M31 11l2 2 2-3" stroke="#ccc" stroke-width="1.2" fill="none"/>
<circle cx="10" cy="34" r="6" fill="#111"/><circle cx="10" cy="34" r="5" fill="#fff"/><path d="M6.5 37.5L13.5 30.5" stroke="#e82020" stroke-width="1.5"/>
<circle cx="28" cy="28" r="13" fill="#3a3a3a"/><circle cx="28" cy="28" r="11.5" fill="#dde2e2"/>
</svg>
<!-- COLOUR PANEL -->
<div class="a" style="left:997px;top:131px;width:1px;height:8px;background:#888"></div>
<div class="a" style="left:1000px;top:131px;width:1px;height:8px;background:#888"></div>
<div class="a" style="left:1008px;top:125px;width:43px;height:22px;background:#3e3e3e"></div>
<div class="t" style="left:1013px;top:130px;font-size:12px;color:#f0f0f0;transform:scaleX(.92);transform-origin:0 0">Colour</div>
<div class="a" style="left:1054px;top:126px;width:210px;height:20px;overflow:hidden">
<div class="t" style="left:1px;top:4px;font-size:12px;color:#d8dde2;width:13px;overflow:hidden">Str</div>
<div class="t" style="left:23px;top:4px;font-size:12px;color:#d8dde2;width:13px;overflow:hidden">TS</div>
<div class="t" style="left:45px;top:4px;font-size:12px;color:#d8dde2;width:13px;overflow:hidden">Sw</div>
<div class="t" style="left:67px;top:4px;font-size:12px;color:#d8dde2;width:13px;overflow:hidden">Xfi</div>
<div class="t" style="left:89px;top:4px;font-size:12px;color:#d8dde2;width:12px;overflow:hidden">His</div>
<div class="t" style="left:111px;top:4px;font-size:12px;color:#d8dde2;width:13px;overflow:hidden">Sy</div>
<div class="t" style="left:133px;top:4px;font-size:12px;color:#d8dde2;width:14px;overflow:hidden">FX</div>
<div class="t" style="left:154px;top:4px;font-size:12px;color:#d8dde2;width:13px;overflow:hidden">Sty</div>
<div class="t" style="left:177px;top:4px;font-size:12px;color:#d8dde2;width:13px;overflow:hidden">Nw</div>
</div>
<svg class="a" style="left:1250px;top:131px" width="14" height="11"><path d="M0 0.5h9M0 2.5h9M0 4.5h9M0 6.5h9" stroke="#ccc" stroke-width="1"/><path d="M10 7h3l-1.5 2z" fill="#ccc"/></svg>
<!-- swatches -->
<svg class="a" style="left:1000px;top:160px" width="48" height="46" viewBox="0 0 48 46">
<circle cx="18" cy="16.3" r="12.3" fill="#383838"/>
<circle cx="18" cy="16.3" r="8.6" fill="none" stroke="#fff" stroke-width="4.8"/>
<path d="M24 10.5A8.6 8.6 0 0 1 26.3 14" stroke="#f02828" stroke-width="4.8" fill="none"/>
<path d="M11.5 22.5A8.6 8.6 0 0 1 9.6 19.5" stroke="#f02828" stroke-width="4.8" fill="none"/>
<path d="M33 5c4 1 6 4 7 8" stroke="#ddd" stroke-width="1.2" fill="none"/><path d="M31 3.5l2.5 1.5-1.5 2.5M38.5 12l1.5 2 2-2" stroke="#ddd" stroke-width="1.2" fill="none"/>
<circle cx="12" cy="35" r="6.2" fill="#111"/><circle cx="12" cy="35" r="5.2" fill="#fff"/><path d="M8.5 38.5L15.5 31.5" stroke="#f02828" stroke-width="1.5"/>
<circle cx="30" cy="29" r="12.6" fill="#383838"/><circle cx="30" cy="29" r="11.4" fill="#dde2e2"/>
</svg>
<svg class="a" style="left:1052px;top:162px" width="20" height="18" viewBox="0 0 20 18"><path d="M2 17l9-9 2 2-9 9z" fill="#999"/><path d="M10 7l4-4 3 3-4 4z" fill="#c89030"/><circle cx="15" cy="4" r="3" fill="#c89030"/></svg>
<div class="a" style="left:1072px;top:163px;width:16px;height:16px;border-radius:50%;background:#ff0000;border:1.5px solid #2e2e2e"></div>
<div class="a" style="left:1155px;top:187px;width:18px;height:18px;background:#2d2d2d"></div>
<svg class="a" style="left:1159px;top:189px" width="10" height="14"><path d="M2.5 6V4a2.5 2.5 0 0 1 5 0v2" stroke="#aaa" stroke-width="1.6" fill="none"/><rect x="1" y="6" width="8" height="7" fill="#aaa"/></svg>
<div class="a" style="left:1177px;top:187px;width:80px;height:17px;background:#383838;border:1px solid #262626;border-radius:3px"></div>
<div class="t" style="left:1182px;top:191px;font-size:11px;color:#f0f0f0">RGB</div>
<svg class="a" style="left:1244px;top:194px" width="8" height="5"><path d="M0 0h8L4 4.5z" fill="#eee"/></svg>
<!-- sliders -->
<div class="t" style="left:1005px;top:216px;font-size:10px;color:#eee">R:</div>
<div class="t" style="left:1004px;top:240px;font-size:10px;color:#eee">G:</div>
<div class="t" style="left:1005px;top:264px;font-size:10px;color:#eee">B:</div>
<div class="a" style="left:1017px;top:215px;width:196px;height:9px;border-radius:5px;background:linear-gradient(90deg,#00e2e2,#ffe2e2);border:1px solid #2a2a2a"></div>
<div class="a" style="left:1017px;top:239px;width:196px;height:9px;border-radius:5px;background:linear-gradient(90deg,#dd00e2,#ddffe2);border:1px solid #2a2a2a"></div>
<div class="a" style="left:1017px;top:263px;width:196px;height:9px;border-radius:5px;background:linear-gradient(90deg,#dde200,#dde2ff);border:1px solid #2a2a2a"></div>
<div class="a thumb" style="left:1176px;top:213.5px"></div>
<div class="a thumb" style="left:1180px;top:238px"></div>
<div class="a thumb" style="left:1180px;top:262px"></div>
<div class="a" style="left:1217px;top:209px;width:40px;height:20px;background:#2c2c2c;border-radius:2px;border:1px solid #262626"></div>
<div class="a" style="left:1217px;top:233px;width:40px;height:20px;background:#2c2c2c;border-radius:2px;border:1px solid #262626"></div>
<div class="a" style="left:1217px;top:257px;width:40px;height:20px;background:#2c2c2c;border-radius:2px;border:1px solid #262626"></div>
<div class="t" style="left:1222px;top:214.5px;font-size:11.5px;color:#eee">221</div>
<div class="t" style="left:1222px;top:238.5px;font-size:11.5px;color:#eee">226</div>
<div class="t" style="left:1222px;top:262.5px;font-size:11.5px;color:#eee">226</div>
<!-- spectrum -->
<div class="a" style="left:1003px;top:284px;width:255px;height:54px;background:#000;border:1px solid #1e1e1e"></div>
<div class="a" style="left:1004px;top:285px;width:253px;height:52px;background:linear-gradient(180deg,rgba(0,0,0,0) 0%,rgba(0,0,0,0) 50%,#000 100%),linear-gradient(180deg,#fff 0%,rgba(255,255,255,0) 50%),linear-gradient(90deg,#f00,#ff0 16.67%,#0f0 33.33%,#0ff 50%,#00f 66.67%,#f0f 83.33%,#f00)"></div>
<div class="t" style="left:1004px;top:343px;font-size:11px;color:#eee">Opacity</div>
<div class="a" style="left:1009px;top:358px;width:14px;height:14px;border-radius:50%;background:#dde2e2;border:1px solid #333"></div>
<div class="a" style="left:1029px;top:362px;width:156px;height:9px;border-radius:5px;background:linear-gradient(90deg,rgba(221,226,226,1),rgba(221,226,226,0)),repeating-conic-gradient(#3c3c3c 0 25%,#555 0 50%) 0 0/6px 6px;border:1px solid #2a2a2a"></div>
<div class="a thumb" style="left:1177px;top:360px;background:#2f2f2f"></div>
<div class="a" style="left:1193px;top:355px;width:60px;height:19px;background:#2c2c2c;border:1px solid #262626;border-radius:3px"></div>
<div class="a" style="left:1237px;top:356px;width:15px;height:17px;background:#383838"></div>
<div class="t" style="left:1199px;top:360.5px;font-size:11.5px;color:#eee">100 %</div>
<svg class="a" style="left:1241px;top:362px" width="8" height="5"><path d="M0 0h8L4 4.5z" fill="#eee"/></svg>
<!-- LAYERS PANEL -->
<div class="a" style="left:1004px;top:401px;width:1px;height:9px;background:#777"></div>
<div class="a" style="left:1007px;top:401px;width:1px;height:9px;background:#777"></div>
<div class="t" style="left:1020px;top:400px;font-size:12px;color:#d8dde2;transform:scaleX(.92);transform-origin:0 0">Brushes</div>
<div class="a" style="left:1063px;top:396px;width:40px;height:22px;background:#3e3e3e"></div>
<div class="t" style="left:1068px;top:400px;font-size:12px;color:#f0f0f0;transform:scaleX(.92);transform-origin:0 0">Layers</div>
<svg class="a" style="left:1225px;top:401px" width="12" height="10"><path d="M0 1.5h8M0 3.5h8M0 5.5h8M0 7.5h8" stroke="#ccc" stroke-width="1"/><path d="M9 8h3l-1.5 2z" fill="#ccc"/></svg>
<svg class="a" style="left:1246px;top:401px" width="9" height="9"><path d="M1 1L8 8M8 1L1 8" stroke="#f0f0f0" stroke-width="1.8"/></svg>
<div class="t" style="left:1005px;top:428px;font-size:11px;color:#eee">Opacity:</div>
<div class="a" style="left:1046px;top:422px;width:73px;height:20px;background:#2b2b2b;border:1px solid #262626;border-radius:3px"></div>
<div class="t" style="left:1052px;top:427px;font-size:11.5px;color:#eee">100 %</div>
<svg class="a" style="left:1108px;top:430px" width="8" height="5"><path d="M0 0h8L4 4.5z" fill="#eee"/></svg>
<div class="a" style="left:1125px;top:423px;width:86px;height:19px;background:#2b2b2b;border:1px solid #262626;border-radius:3px"></div>
<div class="t" style="left:1130px;top:428px;font-size:11.5px;color:#eee">Normal</div>
<svg class="a" style="left:1200px;top:430px" width="8" height="5"><path d="M0 0h8L4 4.5z" fill="#eee"/></svg>
<svg class="a" style="left:1216px;top:425px" width="14" height="14" viewBox="0 0 14 14"><path d="M7 0.5l1.2 1.8 2.1-.6.4 2.1 2.1.6-.6 2.1L14 7.7l-1.8 1.2.6 2.1-2.1.4-.6 2.1-2.1-.6L7 14l-1.2-1.8-2.1.6-.4-2.1-2.1-.6.6-2.1L0 7l1.8-1.2-.6-2.1 2.1-.4.6-2.1 2.1.6z" fill="#aaa"/><circle cx="7" cy="7" r="2.3" fill="#3e3e3e"/></svg>
<svg class="a" style="left:1239px;top:425px" width="12" height="15"><path d="M3 7V4.5a3 3 0 0 1 6 0V7" stroke="#999" stroke-width="1.8" fill="none"/><rect x="1.5" y="7" width="9" height="7.5" rx="1" fill="#999"/></svg>
<!-- rows -->
<div class="a" style="left:997px;top:446px;width:245px;height:31px;background:#2c353d"></div>
<div class="a" style="left:997px;top:477px;width:245px;height:1px;background:#181818"></div>
<div class="a" style="left:997px;top:478px;width:245px;height:30px;background:#2c353d"></div>
<div class="a" style="left:997px;top:508px;width:245px;height:1px;background:#181818"></div>
<div class="a" style="left:997px;top:509px;width:245px;height:30px;background:#6089c9"></div>
<div class="a" style="left:997px;top:539px;width:245px;height:1px;background:#181818"></div>
<div class="a" style="left:997px;top:570px;width:245px;height:1px;background:#181818"></div>
<!-- expanders -->
<svg class="a" style="left:999px;top:454px" width="16" height="16" viewBox="0 0 16 16"><circle cx="8" cy="8" r="7" fill="#2a2a2a" stroke="#e0e0e0" stroke-width="1.3"/><path d="M3.3 5h9.4L8 12.5z" fill="#b0b0b0"/></svg>
<svg class="a" style="left:1009px;top:485px" width="16" height="16" viewBox="0 0 16 16"><circle cx="8" cy="8" r="7" fill="#2a2a2a" stroke="#e0e0e0" stroke-width="1.3"/><path d="M3.3 5h9.4L8 12.5z" fill="#b0b0b0"/></svg>
<!-- thumbs -->
<div class="a" style="left:1018px;top:448px;width:28px;height:28px;background:#262626;border:1px solid #111"></div>
<div class="a" style="left:1020px;top:458px;width:24px;height:8px;background:#3d4243"></div>
<div class="a" style="left:1026px;top:461px;width:12px;height:1px;background:#888"></div>
<div class="a" style="left:1028px;top:480px;width:28px;height:27px;background:#262626;border:1px solid #111"></div>
<div class="a" style="left:1032px;top:489px;width:20px;height:8px;background:#3d4243"></div>
<div class="a" style="left:1037px;top:492px;width:10px;height:1px;background:#888"></div>
<div class="a" style="left:1038px;top:510px;width:28px;height:28px;background:#262626;border:1px solid #111"></div>
<div class="t" style="left:1042px;top:512px;font-family:'Liberation Serif';font-size:24px;color:#8a8a8a">A</div>
<div class="a" style="left:1038px;top:541px;width:28px;height:28px;background:#262626;border:1px solid #111"></div>
<div class="a" style="left:1041px;top:551px;width:22px;height:7px;background:#3a3f40"></div>
<!-- names -->
<div class="t" style="left:1050px;top:457px;font-size:12px;color:#fff"><b>Artboard1</b> <span style="color:#c4ccd4">(Artboard)</span></div>
<div class="t" style="left:1060px;top:488px;font-size:12px;color:#fff"><b>hover</b> <span style="color:#c4ccd4">(Group)</span></div>
<div class="t" style="left:1070px;top:518px;font-size:12px;color:#fff"><b>Register</b> <span style="color:#d8e0ec">(Hello World)</span></div>
<div class="t" style="left:1070px;top:549px;font-size:12px;color:#fff"><b>Shape 5 copy</b> <span style="color:#c4ccd4">(Curve)</span></div>
<div class="t" style="left:1202px;top:516px;font-family:'Liberation Serif';font-style:italic;font-size:15px;color:#9aa4b4">fx</div>
<div class="t" style="left:1202px;top:547px;font-family:'Liberation Serif';font-style:italic;font-size:15px;color:#999">fx</div>
<!-- checkboxes -->
<svg class="a" style="left:1225px;top:455px" width="14" height="14"><rect x="1" y="1" width="12" height="12" rx="2" fill="none" stroke="#ddd" stroke-width="1.2"/><path d="M3.5 7l2.5 3 5-7" stroke="#eee" stroke-width="1.4" fill="none"/></svg>
<svg class="a" style="left:1225px;top:486px" width="14" height="14"><rect x="1" y="1" width="12" height="12" rx="2" fill="none" stroke="#ddd" stroke-width="1.2"/><path d="M3.5 7l2.5 3 5-7" stroke="#eee" stroke-width="1.4" fill="none"/></svg>
<svg class="a" style="left:1225px;top:517px" width="14" height="14"><rect x="1" y="1" width="12" height="12" rx="2" fill="none" stroke="#b8c4d4" stroke-width="1.2"/><path d="M3.5 7l2.5 3 5-7" stroke="#c8d4e4" stroke-width="1.4" fill="none"/></svg>
<svg class="a" style="left:1225px;top:548px" width="14" height="14"><rect x="1" y="1" width="12" height="12" rx="2" fill="none" stroke="#ddd" stroke-width="1.2"/><path d="M3.5 7l2.5 3 5-7" stroke="#eee" stroke-width="1.4" fill="none"/></svg>
<!-- footer -->
<div class="a" style="left:1002px;top:793px;width:21px;height:20px;background:#262626"></div>
<svg class="a" style="left:1004px;top:796px" width="16" height="14"><path d="M1 3l7-2.5 7 2.5-7 2.5z" fill="#bbb"/><path d="M1 6.5l7 2.5 7-2.5M1 10l7 2.5 7-2.5" stroke="#bbb" stroke-width="1.6" fill="none"/></svg>
<svg class="a" style="left:1087px;top:797px" width="16" height="13"><rect x="0" y="0" width="15" height="13" fill="#aaa"/><circle cx="7.5" cy="6.5" r="3.8" fill="#333"/></svg>
<svg class="a" style="left:1110px;top:796px" width="14" height="14"><circle cx="7" cy="7" r="6" fill="#aaa"/><path d="M10 2.5L4 11.5A6 6 0 0 0 10 11z" fill="#3d3d3d"/></svg>
<div class="t" style="left:1131px;top:795px;font-family:'Liberation Serif';font-style:italic;font-size:15px;color:#aaa">fx</div>
<svg class="a" style="left:1195px;top:796px" width="13" height="14"><path d="M1.5 0.5h6l4 4v9h-10z" fill="none" stroke="#bbb" stroke-width="1"/><path d="M7.5 0.5v4h4" fill="none" stroke="#bbb"/></svg>
<div class="a" style="left:1217px;top:797px;width:11px;height:12px;background:repeating-conic-gradient(#ccc 0 25%,#333 0 50%) 0 0/3px 3px;border:1px solid #bbb"></div>
<svg class="a" style="left:1239px;top:796px" width="12" height="14"><path d="M0 2h12M4 2V0.5h4V2" stroke="#aaa" stroke-width="1.2" fill="none"/><path d="M1.5 3.5h9l-.8 10H2.3z" fill="#aaa"/><path d="M4 5v7M6 5v7M8 5v7" stroke="#3d3d3d" stroke-width=".8"/></svg>
<!-- STATUS -->
<div class="t" style="left:17px;top:881px;font-size:12px;color:#c8c8c8"><b style="color:#f4f4f4">Drag</b> to create Art text. <b style="color:#f4f4f4">Click</b> an object to select it.</div>
<svg class="a" style="left:1256px;top:886px" width="9" height="9"><g fill="#999"><rect x="7" y="1" width="1" height="1"/><rect x="5" y="3" width="1" height="1"/><rect x="7" y="3" width="1" height="1"/><rect x="3" y="5" width="1" height="1"/><rect x="5" y="5" width="1" height="1"/><rect x="7" y="5" width="1" height="1"/><rect x="1" y="7" width="1" height="1"/><rect x="3" y="7" width="1" height="1"/><rect x="5" y="7" width="1" height="1"/><rect x="7" y="7" width="1" height="1"/></g></svg>
<div class="a" style="left:0;top:899px;width:1268px;height:1px;background:#242424"></div>
<!-- scroll arrows -->
<svg class="a" style="left:976px;top:152px" width="8" height="7"><path d="M0 7h8L4 0z" fill="#888"/></svg>
<svg class="a" style="left:976px;top:844px" width="8" height="7"><path d="M0 0h8L4 7z" fill="#888"/></svg>
<svg class="a" style="left:7px;top:862px" width="7" height="8"><path d="M7 0v8L0 4z" fill="#888"/></svg>
<svg class="a" style="left:958px;top:862px" width="7" height="8"><path d="M0 0v8L7 4z" fill="#888"/></svg>
</body></html>
